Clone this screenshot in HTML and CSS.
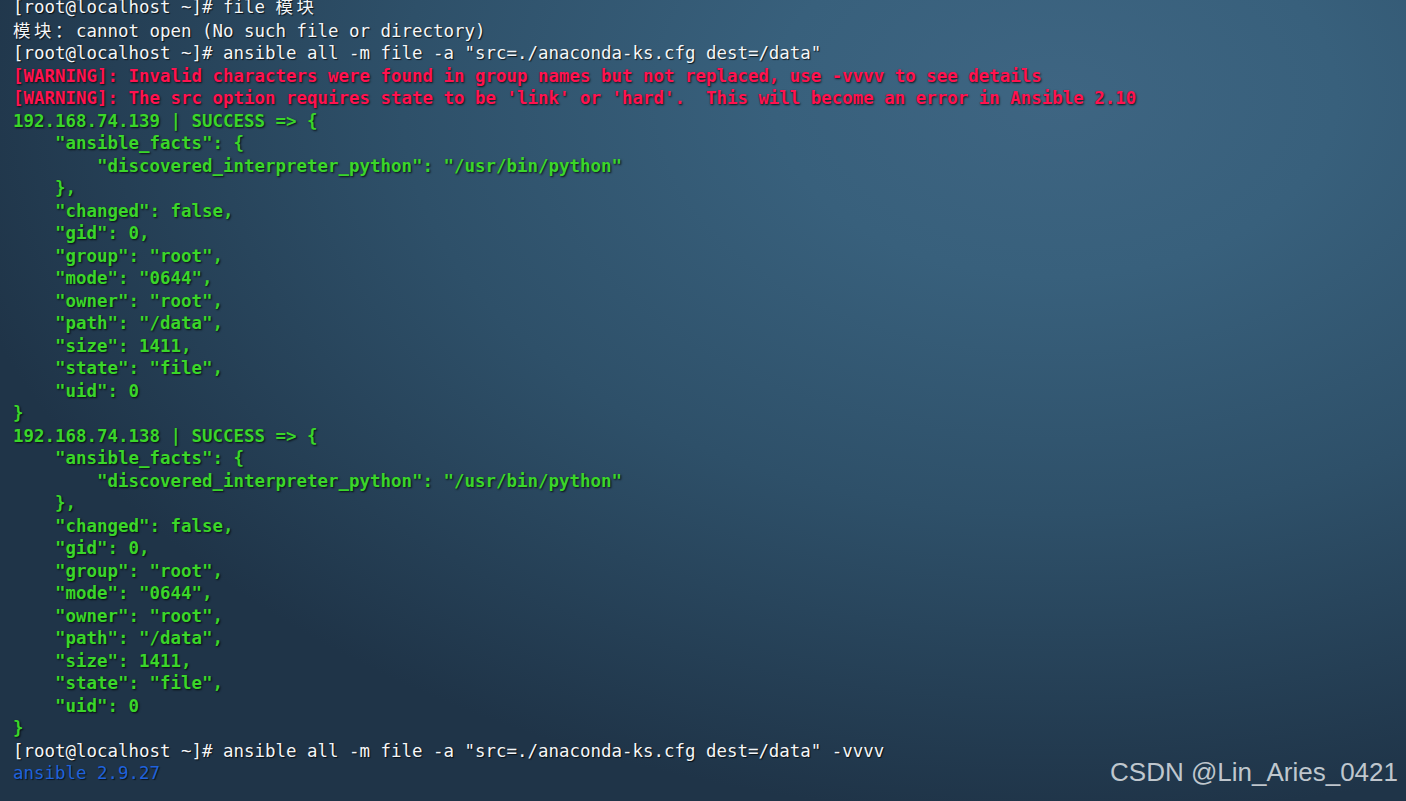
FILE: index.html
```html
<!DOCTYPE html>
<html lang="zh-CN">
<head>
    <meta charset="UTF-8">
    <meta name="viewport" content="width=device-width, initial-scale=1.0">
    <title>ansible file 模块</title>
    <link rel="stylesheet" href="styles.css">
</head>
<body>

    <section class="term">
<pre class="out"><span class="w">[root@localhost ~]# file <span class="cjk">模块</span></span>
<span class="w"><span class="cjk">模块：</span>cannot open (No such file or directory)</span>
<span class="w">[root@localhost ~]# ansible all -m file -a "src=./anaconda-ks.cfg dest=/data"</span>
<span class="r">[WARNING]: Invalid characters were found in group names but not replaced, use -vvvv to see details</span>
<span class="r">[WARNING]: The src option requires state to be 'link' or 'hard'.  This will become an error in Ansible 2.10</span>
<span class="g">192.168.74.139 | SUCCESS =&gt; {
    "ansible_facts": {
        "discovered_interpreter_python": "/usr/bin/python"
    },
    "changed": false,
    "gid": 0,
    "group": "root",
    "mode": "0644",
    "owner": "root",
    "path": "/data",
    "size": 1411,
    "state": "file",
    "uid": 0
}
192.168.74.138 | SUCCESS =&gt; {
    "ansible_facts": {
        "discovered_interpreter_python": "/usr/bin/python"
    },
    "changed": false,
    "gid": 0,
    "group": "root",
    "mode": "0644",
    "owner": "root",
    "path": "/data",
    "size": 1411,
    "state": "file",
    "uid": 0
}</span>
<span class="w">[root@localhost ~]# ansible all -m file -a "src=./anaconda-ks.cfg dest=/data" -vvvv</span>
<span class="b">ansible 2.9.27</span></pre>

        <div class="mark">CSDN @Lin_Aries_0421</div>
    </section>

</body>
</html>
```

FILE: styles.css
```css
* {
    margin: 0;
    padding: 0;
    box-sizing: border-box;
}

html, body {
    width: 100%;
    height: 100%;
}

body {
    overflow: hidden;
    background-color: #1f3448;
}

section.term {
    display: flow-root;
    position: relative;
    width: 100%;
    height: 100%;
    padding: 0 0 0 13px;
    background: radial-gradient(ellipse 80% 90% at 75% 12%, #3e6582 0%, #38607c 25%, #2e5069 58%, #1f3448 100%);
}

section.term .out {
    margin-top: -5px;
    font-family: "DejaVu Sans Mono", "Noto Sans CJK SC", monospace;
    font-size: 17.45px;
    line-height: 22.5px;
    white-space: pre;
}

section.term .cjk {
    font-family: "Noto Sans CJK SC", sans-serif;
    letter-spacing: 3.55px;
}

/* terminal colours */
section.term .w {
    color: #f4f6f8;
    text-shadow: 1px 1px 1px rgba(0, 0, 0, .75);
}

section.term .r {
    color: #ff1250;
    font-weight: bold;
    text-shadow: 1px 1px 2px rgba(0, 0, 0, .8);
}

section.term .g {
    color: #3ad62a;
    font-weight: bold;
    text-shadow: 1px 1px 2px rgba(0, 0, 0, .8);
}

section.term .b {
    color: #1f62dc;
    text-shadow: 1px 1px 1px rgba(0, 0, 0, .6);
}

section.term .mark {
    position: absolute;
    right: 8px;
    bottom: 13px;
    font-family: "Liberation Sans", Arial, sans-serif;
    font-size: 26px;
    color: rgba(222, 226, 230, .85);
}
```
